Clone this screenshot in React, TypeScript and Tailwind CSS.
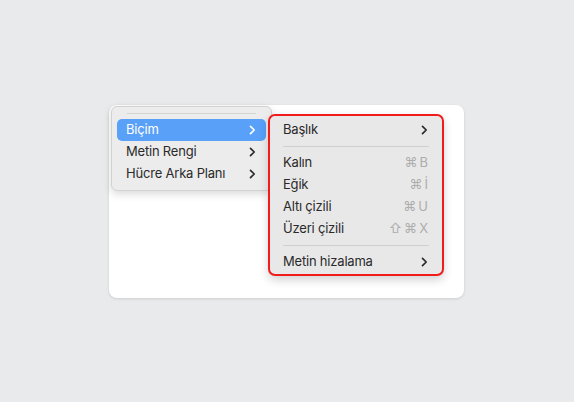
import React from 'react';

const Chevron = ({ className = '' }: { className?: string }) => (
  <svg width="7" height="10" viewBox="0 0 7 10" className={className} fill="none">
    <path d="M1.5 1.3 L5.2 5 L1.5 8.7" stroke="currentColor" strokeWidth="1.7" strokeLinecap="round" strokeLinejoin="round" />
  </svg>
);

const Row = ({ label, shortcut, sub }: { label: string; shortcut?: string; sub?: boolean }) => (
  <div className="flex h-[22px] items-center justify-between pl-[13px] pr-[14px] text-[13px] tracking-[-0.2px] text-[#2a2a2a]">
    <span>{label}</span>
    {shortcut && <span className="mr-[-2px] tracking-[2px] text-[#adadad]">{shortcut}</span>}
    {sub && <Chevron className="text-[#2a2a2a]" />}
  </div>
);

const Sep = () => <div className="mx-[13px] my-[5px] h-px bg-[#cfcfcf]" />;

export default function App() {
  return (
    <div
      className="flex h-[402px] w-[574px] items-center justify-center bg-[#e9eaec]"
      style={{ fontFamily: 'Inter, "Noto Sans", sans-serif' }}
    >
      <div className="relative mr-px h-[193px] w-[355px] rounded-[8px] bg-white shadow-[0_1px_3px_rgba(0,0,0,0.12)]">
        {/* main menu */}
        <div className="absolute left-[2px] top-[1px] w-[161px] rounded-[6px] border border-[#d2d2d2] bg-[#ececec] pb-[5px] pt-[6px] shadow-[0_3px_8px_rgba(0,0,0,0.15)]">
          <div className="mx-[15px] mb-[5px] h-px bg-[#d4d4d4]" />
          <div className="px-[5px] text-[13px] tracking-[-0.2px]">
            <div className="flex h-[22px] items-center justify-between rounded-[5px] bg-[#58a0f8] pl-[9px] pr-[10px] text-white">
              <span>Biçim</span>
              <Chevron />
            </div>
            <div className="flex h-[22px] items-center justify-between pl-[9px] pr-[10px] text-[#2a2a2a]">
              <span>Metin Rengi</span>
              <Chevron className="text-[#2a2a2a]" />
            </div>
            <div className="flex h-[22px] items-center justify-between pl-[9px] pr-[10px] text-[#2a2a2a]">
              <span>Hücre Arka Planı</span>
              <Chevron className="text-[#2a2a2a]" />
            </div>
          </div>
        </div>

        {/* submenu */}
        <div className="absolute left-[159px] top-[9px] w-[176px] rounded-[7px] border-2 border-[#f21b1b] bg-[#e8e8e8] pb-px pt-[3px] shadow-[0_4px_10px_rgba(0,0,0,0.18)]">
          <Row label="Başlık" sub />
          <Sep />
          <Row label="Kalın" shortcut="⌘B" />
          <Row label="Eğik" shortcut="⌘İ" />
          <Row label="Altı çizili" shortcut="⌘U" />
          <Row label="Üzeri çizili" shortcut="⇧⌘X" />
          <Sep />
          <Row label="Metin hizalama" sub />
        </div>
      </div>
    </div>
  );
}
